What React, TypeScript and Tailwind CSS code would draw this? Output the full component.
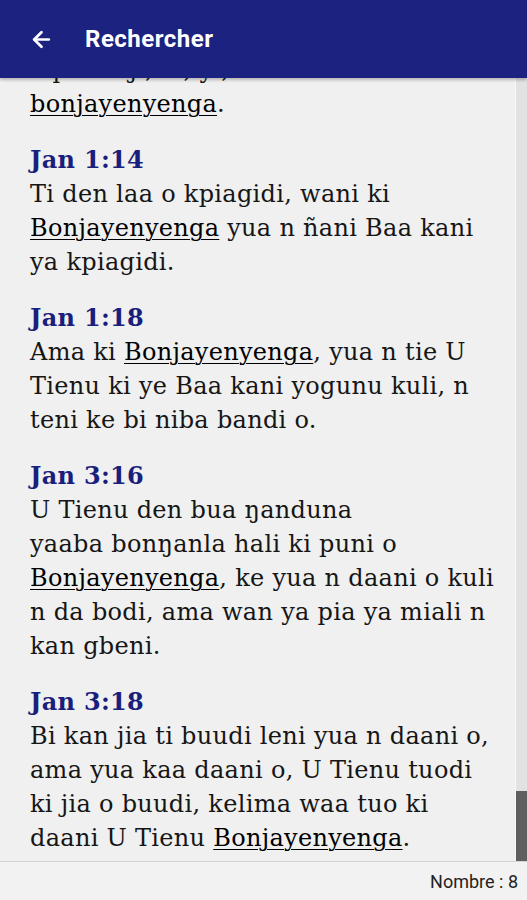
import { ArrowLeft } from "lucide-react";

type Verse = { ref: string; lines: (string | { u: string; after?: string; before?: string })[] };

const VERSES: Verse[] = [
  {
    ref: "Jan 1:14",
    lines: [
      "Ti den laa o kpiagidi, wani ki",
      { u: "Bonjayenyenga", after: " yua n ñani Baa kani" },
      "ya kpiagidi.",
    ],
  },
  {
    ref: "Jan 1:18",
    lines: [
      { before: "Ama ki ", u: "Bonjayenyenga", after: ", yua n tie U" },
      "Tienu ki ye Baa kani yogunu kuli, n",
      "teni ke bi niba bandi o.",
    ],
  },
  {
    ref: "Jan 3:16",
    lines: [
      "U Tienu den bua ŋanduna",
      "yaaba bonŋanla hali ki puni o",
      { u: "Bonjayenyenga", after: ", ke yua n daani o kuli" },
      "n da bodi, ama wan ya pia ya miali n",
      "kan gbeni.",
    ],
  },
  {
    ref: "Jan 3:18",
    lines: [
      "Bi kan jia ti buudi leni yua n daani o,",
      "ama yua kaa daani o, U Tienu tuodi",
      "ki jia o buudi, kelima waa tuo ki",
      { before: "daani U Tienu ", u: "Bonjayenyenga", after: "." },
    ],
  },
];

function Line({ line }: { line: Verse["lines"][number] }) {
  if (typeof line === "string") return <div>{line}</div>;
  return (
    <div>
      {line.before}
      <span className="text-black underline decoration-1 underline-offset-[3px]">{line.u}</span>
      {line.after}
    </div>
  );
}

export default function App() {
  return (
    <div className="flex h-[900px] w-[527px] flex-col overflow-hidden bg-[#f0f0f0]">
      {/* Toolbar */}
      <header className="relative z-10 flex h-[78px] shrink-0 items-center gap-[31px] bg-[#1c227f] pl-[29px] text-white shadow-[0_2px_3px_rgba(0,0,0,0.25)]">
        <ArrowLeft className="h-[25px] w-[25px]" strokeWidth={2.6} />
        <h1 className="font-['Roboto',sans-serif] text-[24px] font-bold tracking-[0.5px]">Rechercher</h1>
      </header>

      {/* Results */}
      <div className="flex min-h-0 flex-1">
        <div className="min-w-0 flex-1 overflow-hidden">
          <div className="-mt-[25px] whitespace-nowrap pl-[30px] font-['DejaVu_Serif',serif] text-[24px] leading-[34px] tracking-[0.3px] text-[#161616]">
            <div aria-hidden="true">a pua o ji, ki, yi, ti den kua ki o</div>
            <div>
              <span className="text-black underline decoration-1 underline-offset-[3px]">bonjayenyenga</span>.
            </div>
            {VERSES.map((v) => (
              <div key={v.ref} className="mt-[22px]">
                <div className="font-bold text-[#1a1f7c]">{v.ref}</div>
                {v.lines.map((l, i) => (
                  <Line key={i} line={l} />
                ))}
              </div>
            ))}
          </div>
        </div>
        <div className="flex w-[12px] shrink-0 flex-col border-l border-[#f6f6f6] bg-[#e2e2e2]">
          <div className="mt-auto h-[70px] bg-[#5f5f5f]" />
        </div>
      </div>

      {/* Footer */}
      <div className="flex h-[39px] shrink-0 items-center justify-end border-t border-[#d4d4d4] bg-[#f2f2f2] pr-[9px] font-['Roboto',sans-serif] text-[18px] text-[#222]">
        Nombre : 8
      </div>
    </div>
  );
}
